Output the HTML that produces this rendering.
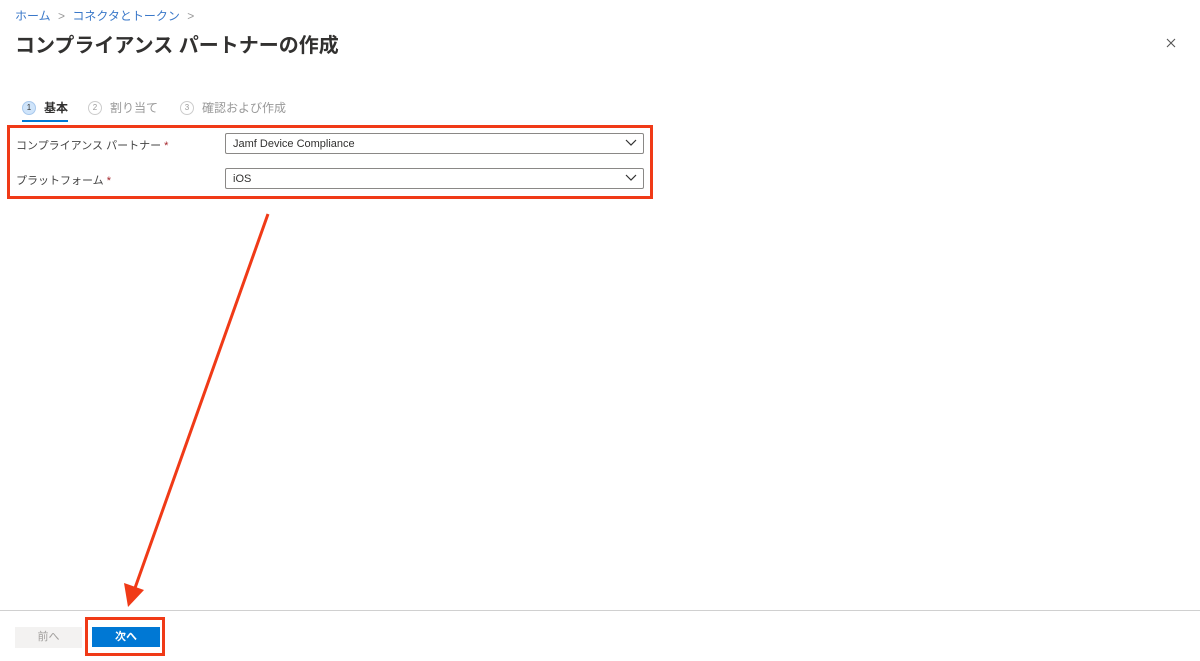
<!DOCTYPE html>
<html><head><meta charset="utf-8"><style>
*{margin:0;padding:0;box-sizing:border-box}
body{width:1200px;height:661px;background:#fff;font-family:"Liberation Sans","Noto Sans CJK JP",sans-serif;position:relative;overflow:hidden;color:#323130}
.a{position:absolute}
</style></head><body>
<div class="a" style="left:15px;top:7px;font-size:12px;color:#3a78c9">ホーム <span style="color:#999;margin:0 4px">&gt;</span> コネクタとトークン <span style="color:#999;margin:0 4px">&gt;</span></div>
<div class="a" style="left:15px;top:29px;font-size:20px;font-weight:bold;color:#323130">コンプライアンス パートナーの作成</div>
<svg class="a" style="left:1166px;top:38px" width="10" height="10"><path d="M1 1L9 9M9 1L1 9" stroke="#555" stroke-width="1.1"/></svg>
<div class="a" style="left:22px;top:99px;font-size:12px;display:flex;align-items:center">
<span style="width:14px;height:14px;border-radius:50%;background:#cfe4fa;border:1px solid #a8c8ec;font-size:8px;display:inline-flex;align-items:center;justify-content:center">1</span><span style="margin-left:8px;font-weight:bold">基本</span>
<span style="margin-left:20px;width:14px;height:14px;border-radius:50%;border:1px solid #ccc;font-size:8px;color:#999;display:inline-flex;align-items:center;justify-content:center">2</span><span style="margin-left:8px;color:#999">割り当て</span>
<span style="margin-left:22px;width:14px;height:14px;border-radius:50%;border:1px solid #ccc;font-size:8px;color:#999;display:inline-flex;align-items:center;justify-content:center">3</span><span style="margin-left:8px;color:#999">確認および作成</span>
</div>
<div class="a" style="left:22px;top:120px;width:46px;height:2px;background:#0078d4"></div>
<div class="a" style="left:7px;top:125px;width:646px;height:74px;border:3px solid #f03a17"></div>
<div class="a" style="left:16px;top:137px;font-size:11px;color:#444">コンプライアンス パートナー <span style="color:#a4262c">*</span></div>
<div class="a" style="left:16px;top:172px;font-size:11px;color:#444">プラットフォーム <span style="color:#a4262c">*</span></div>
<div class="a" style="left:225px;top:133px;width:419px;height:21px;border:1px solid #8a8886;border-radius:2px;font-size:11px;padding:0 7px;line-height:20px">Jamf Device Compliance</div>
<div class="a" style="left:225px;top:168px;width:419px;height:21px;border:1px solid #8a8886;border-radius:2px;font-size:11px;padding:0 7px;line-height:20px">iOS</div>
<svg class="a" style="left:0;top:0" width="1200" height="661">
<polyline points="626,140 631,145 636,140" fill="none" stroke="#333" stroke-width="1.2"/>
<polyline points="626,175 631,180 636,175" fill="none" stroke="#333" stroke-width="1.2"/>
<line x1="268" y1="214" x2="135" y2="588" stroke="#f03a17" stroke-width="3"/>
<polygon points="128,607 124,583 144,590" fill="#f03a17"/>
</svg>
<div class="a" style="left:0;top:610px;width:1200px;height:1px;background:#d0d0d0"></div>
<div class="a" style="left:15px;top:627px;width:67px;height:21px;background:#f3f2f1;color:#a19f9d;font-size:11px;text-align:center;line-height:21px">前へ</div>
<div class="a" style="left:85px;top:617px;width:80px;height:39px;border:3px solid #f03a17"></div>
<div class="a" style="left:92px;top:627px;width:68px;height:20px;background:#0078d4;color:#fff;font-weight:bold;font-size:11px;text-align:center;line-height:20px">次へ</div>
</body></html>
